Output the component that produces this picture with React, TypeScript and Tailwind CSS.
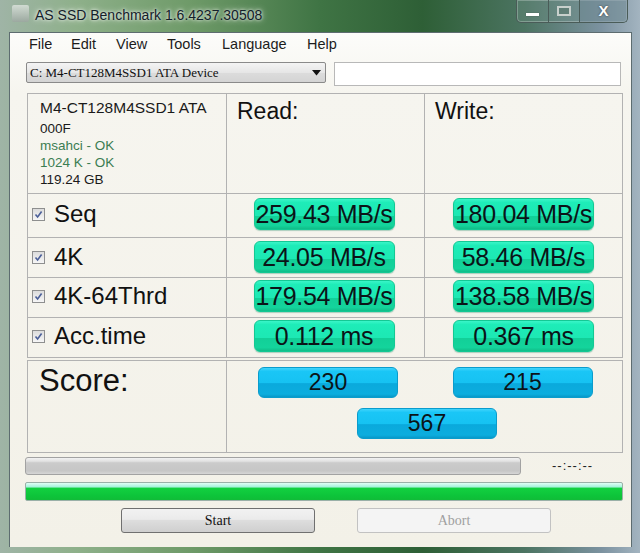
import { ReactNode } from "react";

const sans = "font-['Liberation_Sans',Arial,sans-serif]";
const serif = "font-['Liberation_Serif','Times_New_Roman',serif]";

const rows = [
  { label: "Seq", read: "259.43 MB/s", write: "180.04 MB/s", h: "h-[44px]", pt: "pt-[4px]" },
  { label: "4K", read: "24.05 MB/s", write: "58.46 MB/s", h: "h-[40px]", pt: "pt-[3px]" },
  { label: "4K-64Thrd", read: "179.54 MB/s", write: "138.58 MB/s", h: "h-[40px]", pt: "pt-[2px]" },
  { label: "Acc.time", read: "0.112 ms", write: "0.367 ms", h: "h-[39px]", pt: "pt-[2px]" },
];

function GreenPill({ children }: { children: ReactNode }) {
  return (
    <div className="flex h-[32px] w-[141px] items-center justify-center rounded-[6px] border border-[#14c894] bg-[linear-gradient(to_bottom,#3af5c8_0%,#1eecb8_12%,#1de8b4_55%,#12cf98_58%,#14d49c_88%,#10bd88_100%)] text-[25px] leading-none tracking-[-0.3px] text-[#0b1418] shadow-[0_1px_1px_rgba(0,120,80,0.3)]">
      {children}
    </div>
  );
}

function BluePill({ children }: { children: ReactNode }) {
  return (
    <div className="flex h-[31px] w-[140px] items-center justify-center rounded-[6px] border border-[#0a9ccc] bg-[linear-gradient(to_bottom,#40d4fc_0%,#1ac6f6_12%,#16c2f2_50%,#0aa9dc_54%,#0cadde_90%,#0898c8_100%)] text-[23px] leading-none text-[#0b1418]">
      {children}
    </div>
  );
}

function Check() {
  return (
    <div className="flex h-[13px] w-[13px] shrink-0 items-center justify-center border border-[#8e8f8f] bg-[linear-gradient(to_bottom,#dcdcdc,#f6f6f6)]">
      <svg width="9" height="9" viewBox="0 0 9 9">
        <path d="M1.5 4.5 L3.6 7 L7.6 1.5" fill="none" stroke="#4b5f98" strokeWidth="1.6" />
      </svg>
    </div>
  );
}

export default function App() {
  return (
    <div
      className={`${sans} flex h-[553px] w-[640px] flex-col overflow-hidden bg-[linear-gradient(90deg,#9fb4a6_0%,#8eb08a_12%,#6e9a68_30%,#3f7444_50%,#2e5f36_66%,#4c7462_82%,#7c92a0_94%,#a3b4c0_100%)]`}
    >
      {/* title bar */}
      <div className="flex h-[32px] shrink-0 items-start">
        <div className="mt-[5px] ml-[12px] h-[17px] w-[17px] rounded-[2px] bg-[linear-gradient(to_bottom,#e8ece8,#9ca4a0)] opacity-70" />
        <div className="mt-[6px] ml-[6px] text-[14px] leading-[18px] text-[#14202a] [text-shadow:0_0_6px_rgba(255,255,255,0.9),0_0_3px_rgba(255,255,255,0.9)]">
          AS SSD Benchmark 1.6.4237.30508
        </div>
        <div className="ml-auto mr-[12px] flex h-[23px] overflow-hidden rounded-b-[5px] border border-t-0 border-[#4a5c58] bg-[rgba(120,150,140,0.25)] shadow-[inset_0_0_0_1px_rgba(255,255,255,0.25)]">
          <div className="flex w-[32px] items-end justify-center border-r border-[#4a5c58] pb-[6px]">
            <div className="h-[3px] w-[13px] bg-white shadow-[0_0_1px_#333]" />
          </div>
          <div className="flex w-[31px] items-center justify-center border-r border-[#4a5c58]">
            <div className="h-[10px] w-[14px] border-2 border-[#c8d0cc] bg-[rgba(90,120,110,0.6)]" />
          </div>
          <div className="flex w-[47px] items-center justify-center bg-[rgba(110,135,150,0.45)] text-[15px] font-bold text-white [text-shadow:0_0_2px_#333]">
            X
          </div>
        </div>
      </div>

      {/* client */}
      <div className="ml-[9px] flex h-[515px] w-[623px] flex-col border border-b-0 border-[#5d6c70] bg-[linear-gradient(to_bottom,#fcfcfa_0px,#f6f5ef_60px,#f3f1e8_100%)]">
        {/* menu */}
        <div className="flex h-[24px] shrink-0 items-center pl-[19px] text-[14.5px] text-[#1c1c1c]">
          <span className="w-[42px]">File</span>
          <span className="w-[45px]">Edit</span>
          <span className="w-[51px]">View</span>
          <span className="w-[55px]">Tools</span>
          <span className="w-[85px]">Language</span>
          <span>Help</span>
        </div>

        {/* drive select */}
        <div className="mt-[5px] flex h-[24px] shrink-0 items-start">
          <div className={`${serif} ml-[16px] flex h-[21px] w-[300px] items-center rounded-[2px] border border-[#8a8a8a] bg-[linear-gradient(to_bottom,#f4f4f4,#e6e6e6_50%,#dcdcdc_51%,#d4d4d4)] pl-[3px] pr-[4px] text-[13px] text-[#111]`}>
            <span className="flex-1">C: M4-CT128M4SSD1 ATA Device</span>
            <svg width="9" height="6" viewBox="0 0 9 6">
              <path d="M0 0 H9 L4.5 5.5 Z" fill="#111" />
            </svg>
          </div>
          <div className="ml-[8px] h-[24px] w-[287px] border border-[#b8b8b8] bg-white" />
        </div>

        {/* results table */}
        <div className="mt-[7px] ml-[17px] w-[596px] shrink-0 border border-[#b2b2b2]">
          <div className="flex h-[100px] border-b border-[#b2b2b2]">
            <div className="w-[199px] border-r border-[#b2b2b2] pt-[5px] pl-[12px] text-[#1a1a1a]">
              <div className="text-[15.5px] leading-[18px]">M4-CT128M4SSD1 ATA</div>
              <div className="mt-[3px] text-[13.5px] leading-[17px]">
                <div>000F</div>
                <div className="text-[#3b7d52]">msahci - OK</div>
                <div className="text-[#3b7d52]">1024 K - OK</div>
                <div>119.24 GB</div>
              </div>
            </div>
            <div className="w-[198px] border-r border-[#b2b2b2] pt-[4px] pl-[10px] text-[23px] leading-[26px] text-[#111]">
              Read:
            </div>
            <div className="flex-1 pt-[4px] pl-[10px] text-[23px] leading-[26px] text-[#111]">Write:</div>
          </div>
          {rows.map((r, i) => (
            <div
              key={r.label}
              className={`flex ${r.h} ${i < rows.length - 1 ? "border-b border-[#b2b2b2]" : ""}`}
            >
              <div className={`w-[199px] border-r border-[#b2b2b2] ${r.pt} pl-[4px]`}>
                <div className="flex h-[32px] items-center gap-[9px]">
                  <Check />
                  <span className="text-[24px] leading-none text-[#111]">{r.label}</span>
                </div>
              </div>
              <div className={`flex w-[198px] justify-center border-r border-[#b2b2b2] ${r.pt} pr-[3px]`}>
                <GreenPill>{r.read}</GreenPill>
              </div>
              <div className={`flex flex-1 justify-center ${r.pt}`}>
                <GreenPill>{r.write}</GreenPill>
              </div>
            </div>
          ))}
        </div>

        {/* score */}
        <div className="mt-[2px] ml-[17px] flex h-[93px] w-[596px] shrink-0 border border-[#b2b2b2]">
          <div className="w-[199px] border-r border-[#b2b2b2] pt-[3px] pl-[11px] text-[31px] leading-[34px] text-[#111]">
            Score:
          </div>
          <div className="flex flex-1 flex-col pt-[6px]">
            <div className="flex">
              <div className="flex w-[198px] justify-center pl-[4px]">
                <BluePill>230</BluePill>
              </div>
              <div className="flex flex-1 justify-center pr-[2px]">
                <BluePill>215</BluePill>
              </div>
            </div>
            <div className="mt-[10px] flex justify-center pl-[5px]">
              <BluePill>567</BluePill>
            </div>
          </div>
        </div>

        {/* progress */}
        <div className="mt-[4px] ml-[15px] flex h-[18px] shrink-0 items-center">
          <div className="h-[18px] w-[496px] rounded-[3px] border border-[#a2a2a2] bg-[linear-gradient(to_bottom,#f2f2f2_0%,#e2e2e2_20%,#cbcbcb_30%,#c6c6c6_80%,#d6d6d6_100%)]" />
          <div className="ml-[31px] text-[13px] tracking-[1px] text-[#222]">--:--:--</div>
        </div>
        <div className="mt-[7px] ml-[15px] h-[19px] w-[598px] shrink-0 rounded-[2px] border border-[#9ab0a8] bg-[linear-gradient(to_bottom,#e0fff6_0%,#a8f2dc_22%,#12d040_32%,#0dc43a_75%,#10bc38_100%)]" />

        {/* buttons */}
        <div className={`${serif} mt-[7px] flex h-[25px] shrink-0 text-[14px]`}>
          <div className="ml-[111px] flex w-[194px] items-center justify-center rounded-[3px] border border-[#707070] bg-[linear-gradient(to_bottom,#f2f2f2_0%,#ebebeb_45%,#dddddd_50%,#cfcfcf_100%)] text-[#111]">
            Start
          </div>
          <div className="ml-[42px] flex w-[194px] items-center justify-center rounded-[3px] border border-[#c2c2c2] bg-[#f4f4f4] text-[#a0a0a0]">
            Abort
          </div>
        </div>
      </div>
    </div>
  );
}
